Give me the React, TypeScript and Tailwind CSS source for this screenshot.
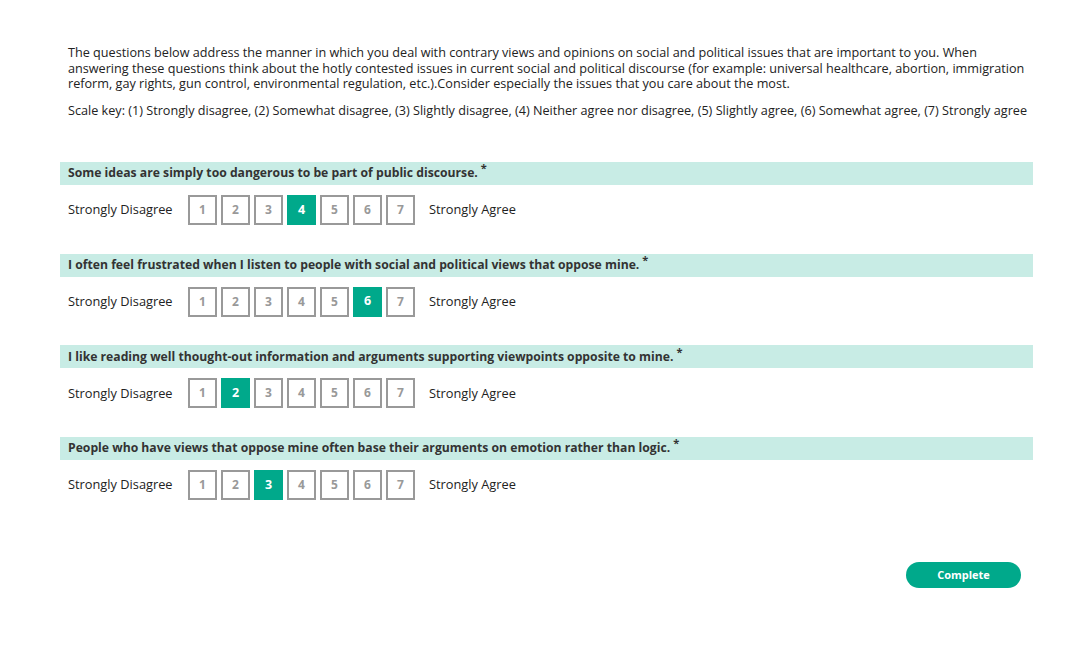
import React from "react";

const questions = [
  { text: "Some ideas are simply too dangerous to be part of public discourse.", sel: 4 },
  { text: "I often feel frustrated when I listen to people with social and political views that oppose mine.", sel: 6 },
  { text: "I like reading well thought-out information and arguments supporting viewpoints opposite to mine.", sel: 2 },
  { text: "People who have views that oppose mine often base their arguments on emotion rather than logic.", sel: 3 },
];

export default function App() {
  return (
    <div className="w-[1092px] h-[669px] bg-white text-[#222] font-['Open_Sans',sans-serif]">
      <div className="pl-[60px] pt-[45px] w-[1033px]">
        <div className="pl-[8px] text-[12.65px] leading-[15.5px]">
          <p>
            The questions below address the manner in which you deal with contrary views and opinions on social and political issues that are important to you. When answering these questions think about the hotly contested issues in current social and political discourse (for example: universal healthcare, abortion, immigration reform, gay rights, gun control, environmental regulation, etc.).Consider especially the issues that you care about the most.
          </p>
          <p className="mt-[11px] whitespace-nowrap">
            Scale key: (1) Strongly disagree, (2) Somewhat disagree, (3) Slightly disagree, (4) Neither agree nor disagree, (5) Slightly agree, (6) Somewhat agree, (7) Strongly agree
          </p>
        </div>
        <div className="mt-[44px] flex flex-col gap-[28.7px]">
          {questions.map((q, i) => (
            <div key={i}>
              <div className="h-[23px] bg-[#c8ece5] flex items-center pl-[8px] text-[12.2px] font-bold text-[#333]">
                <span>{q.text}</span>
                <span className="relative top-[-5px] ml-[3px] text-[11px]">*</span>
              </div>
              <div className="mt-[10px] flex items-center h-[30px] pl-[8px] text-[12.8px]">
                <span className="w-[120px]">Strongly Disagree</span>
                <div className="flex gap-[4px]">
                  {[1, 2, 3, 4, 5, 6, 7].map((n) => (
                    <div
                      key={n}
                      className={
                        n === q.sel
                          ? "w-[29px] h-[30px] flex items-center justify-center bg-[#00a98b] text-white font-bold text-[12.5px]"
                          : "w-[29px] h-[30px] flex items-center justify-center border-2 border-[#999] text-[#999] font-bold text-[12px]"
                      }
                    >
                      {n}
                    </div>
                  ))}
                </div>
                <span className="ml-[14px]">Strongly Agree</span>
              </div>
            </div>
          ))}
        </div>
        <div className="mt-[62px] flex justify-end pr-[12px]">
          <button className="w-[115px] h-[26px] rounded-full bg-[#00a98b] text-white font-bold text-[11px]">
            Complete
          </button>
        </div>
      </div>
    </div>
  );
}
